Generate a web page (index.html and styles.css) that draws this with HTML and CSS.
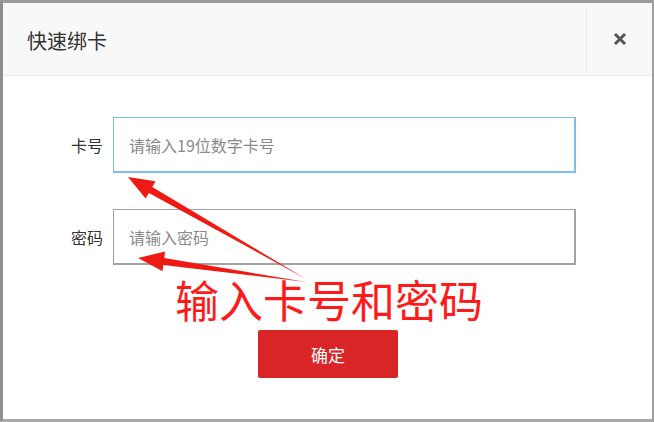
FILE: index.html
```html
<!DOCTYPE html>
<html lang="zh-CN">
<head>
    <meta charset="UTF-8">
    <title>快速绑卡</title>
    <link rel="stylesheet" href="styles.css">
</head>
<body>

    <div class="dialog">
        <div class="dialog-header">
            <h2 class="dialog-title">快速绑卡</h2>
            <button class="close-btn" aria-label="关闭">
                <svg width="14" height="14" viewBox="0 0 14 14">
                    <path d="M2 2 L12 12 M12 2 L2 12" stroke="#555" stroke-width="3" stroke-linecap="butt"/>
                </svg>
            </button>
        </div>

        <div class="dialog-body">
            <div class="form">
                <div class="form-row">
                    <label class="form-label" for="cardNo">卡号</label>
                    <input class="form-input active" id="cardNo" type="text" placeholder="请输入19位数字卡号">
                </div>
                <div class="form-row">
                    <label class="form-label" for="pwd">密码</label>
                    <input class="form-input" id="pwd" type="text" placeholder="请输入密码">
                </div>
            </div>

            <div class="note">输入卡号和密码</div>

            <button class="submit-btn">确定</button>
        </div>

        <!-- annotation arrows drawn over the form -->
        <svg class="arrows" width="654" height="422" viewBox="0 0 654 422">
            <polygon fill="#f01a14" points="128,177 155.5,181.2 152.3,186.9 306,279 148.9,192.9 145.6,198.6"/>
            <polygon fill="#f01a14" points="138,258 165.1,251.5 164.3,257.9 306,282 163.3,264.9 162.5,271.3"/>
        </svg>
    </div>

</body>
</html>
```

FILE: styles.css
```css
body {
    margin: 0;
    background-color: #fff;
    font-family: "Noto Sans CJK SC", "Liberation Sans", sans-serif;
}

.dialog {
    position: relative;
    width: 654px;
    height: 422px;
    box-sizing: border-box;
    border-top: 3px solid #9a9a9a;
    border-left: 3px solid #8f8f8f;
    border-right: 2px solid #a0a0a0;
    border-bottom: 3px solid #a8a8a8;
    background-color: #fff;
    overflow: hidden;
}

.dialog-header {
    display: flex;
    align-items: stretch;
    height: 72px;
    background-color: #f8f8f8;
    border-bottom: 1px solid #ececec;
}

.dialog-title {
    flex: 1;
    margin: 0;
    padding-left: 24px;
    font-size: 20px;
    font-weight: normal;
    line-height: 76px;
    color: #333;
}

.close-btn {
    width: 66px;
    padding: 0;
    border: none;
    border-left: 1px solid #ececec;
    background-color: #f8f8f8;
    display: flex;
    justify-content: center;
    align-items: center;
    cursor: pointer;
}

.dialog-body {
    padding-top: 41px;
}

.form {
    display: flex;
    flex-direction: column;
    gap: 36px;
}

.form-row {
    display: flex;
    align-items: center;
}

.form-label {
    width: 100px;
    padding-right: 10px;
    text-align: right;
    font-size: 16px;
    color: #333;
}

.form-input {
    width: 463px;
    height: 56px;
    box-sizing: border-box;
    padding: 0 15px;
    border: 2px solid #a3a3a3;
    border-width: 1px 2px 2px 1px;
    font-family: inherit;
    font-size: 16px;
    color: #333;
    outline: none;
}

.form-input.active {
    border: 2px solid #7cc0ea;
    border-width: 1px 2px 2px 1px;
}

.form-input::placeholder {
    color: #8a8a8a;
}

.note {
    margin-top: 11px;
    margin-left: 172px;
    font-size: 44px;
    line-height: 46px;
    color: #ff1a1a;
}

.submit-btn {
    display: block;
    margin: 8px 0 0 255px;
    width: 140px;
    height: 48px;
    border: none;
    border-radius: 2px;
    background-color: #da2527;
    color: #fff;
    font-family: inherit;
    font-size: 17px;
    cursor: pointer;
}

.arrows {
    position: absolute;
    top: -3px;
    left: -3px;
    pointer-events: none;
}
```
